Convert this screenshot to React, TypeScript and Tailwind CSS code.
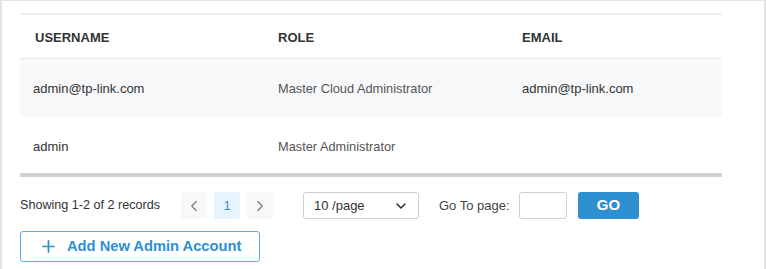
import { ChevronDown, ChevronLeft, ChevronRight, Plus } from 'lucide-react'

interface Admin {
  username: string
  role: string
  email: string
}

const admins: Admin[] = [
  { username: 'admin@tp-link.com', role: 'Master Cloud Administrator', email: 'admin@tp-link.com' },
  { username: 'admin', role: 'Master Administrator', email: '' }
]

const font = { fontFamily: '"Liberation Sans", Arial, sans-serif' }

export default function App(): JSX.Element {
  return (
    <div
      className="h-[269px] w-[766px] overflow-hidden border-x-2 border-t border-[#e3e3e3] bg-white pl-[18px] pr-[42px] pt-3"
      style={font}
    >
      {/* Admin table */}
      <div className="border-t-2 border-b-4 border-t-[#efefef] border-b-[#d2d2d2]">
        <div className="flex h-[44px] items-center border-b border-[#e8e8e8] pt-[2px] text-[13px] font-bold uppercase text-[#333]">
          <div className="w-[243px] pl-[15px]">Username</div>
          <div className="w-[244px] pl-[15px]">Role</div>
          <div className="flex-1 pl-[15px]">Email</div>
        </div>
        {admins.map((a, i) => (
          <div
            key={a.username}
            className={`flex items-center text-[13px] ${i === 0 ? 'h-[58px] bg-[#f7f8fa] pt-[2px]' : 'h-[56px] bg-white pt-[4px]'}`}
          >
            <div className="w-[243px] pl-[13px] text-[#333]">{a.username}</div>
            <div className="w-[244px] pl-[15px] text-[12.8px] text-[#555]">{a.role}</div>
            <div className="flex-1 pl-[15px] text-[#333]">{a.email}</div>
          </div>
        ))}
      </div>

      {/* Pagination */}
      <div className="mt-[15px] flex h-[27px] items-center text-[12.6px] text-[#333]">
        <span className="w-[140px] whitespace-nowrap">Showing 1-2 of 2 records</span>
        <div className="ml-[21px] flex gap-[7px]">
          <button className="flex h-[27px] w-[26px] items-center justify-center rounded-[3px] bg-[#f6f8fa] text-[#777]">
            <ChevronLeft className="h-[18px] w-[18px]" strokeWidth={1.5} />
          </button>
          <button className="flex h-[27px] w-[26px] items-center justify-center rounded-[3px] bg-[#e8f4fd] text-[13px] text-[#2d8fd5]">
            1
          </button>
          <button className="flex h-[27px] w-[26px] items-center justify-center rounded-[3px] bg-[#f6f8fa] text-[#777]">
            <ChevronRight className="h-[18px] w-[18px]" strokeWidth={1.5} />
          </button>
        </div>
        <div className="ml-[30px] flex h-[27px] w-[116px] items-center justify-between rounded-[3px] border border-[#cfcfcf] pl-[10px] pr-[9px] text-[13px] text-[#333]">
          <span>10 /page</span>
          <ChevronDown className="h-4 w-4 text-[#333]" strokeWidth={2.4} />
        </div>
        <span className="ml-[20px] w-[69px] whitespace-nowrap text-[13px] text-[#444]">Go To page:</span>
        <input className="ml-[11px] h-[27px] w-[48px] rounded-[3px] border border-[#d0d0d0] outline-none" />
        <button className="ml-[11px] flex h-[27px] w-[61px] items-center justify-center rounded-[3px] bg-[#2e8fd1] text-[15px] font-bold text-white">
          GO
        </button>
      </div>

      {/* Add account */}
      <button className="mt-[12px] flex h-[31px] w-[240px] items-center gap-[9px] rounded-[3px] border border-[#5eaee3] pl-[18px] text-[14.7px] font-bold text-[#2d8fd5]">
        <Plus className="h-[19px] w-[19px]" strokeWidth={2.2} />
        <span>Add New Admin Account</span>
      </button>
    </div>
  )
}
